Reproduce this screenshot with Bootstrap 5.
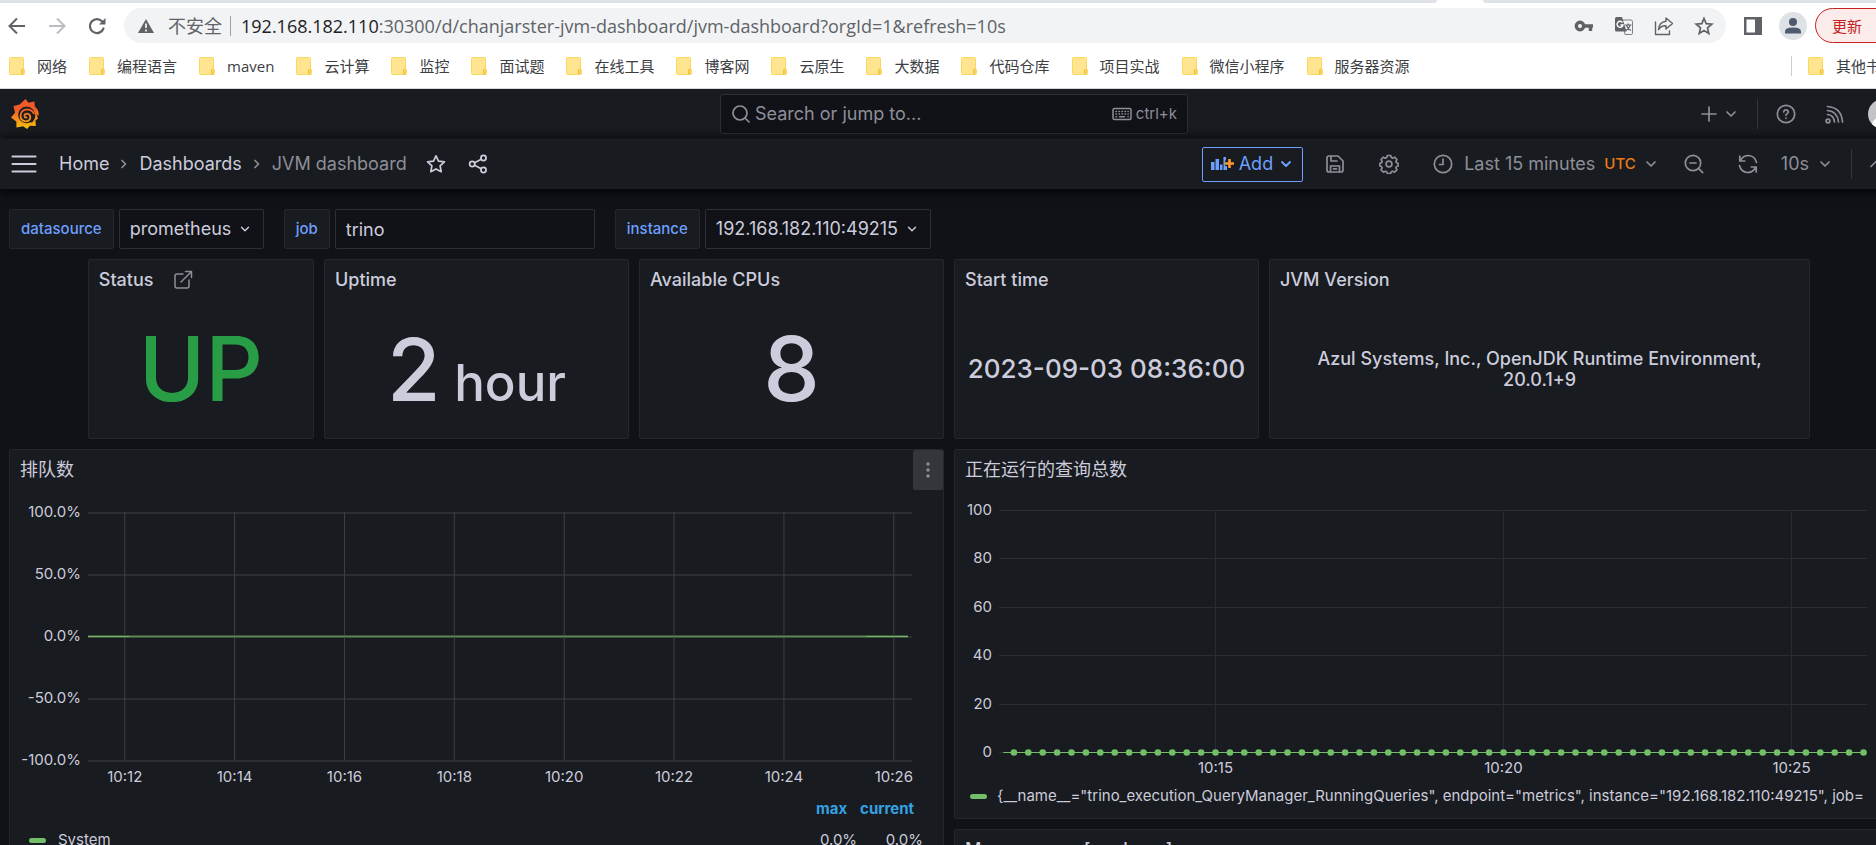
<!DOCTYPE html>
<html lang="zh-CN">
<head>
<meta charset="utf-8">
<meta name="viewport" content="width=device-width, initial-scale=1">
<title>JVM dashboard - Grafana</title>
<link href="https://cdn.jsdelivr.net/npm/bootstrap@5.3.0/dist/css/bootstrap.min.css" rel="stylesheet">
<style>
:root{--canvas:#111217;--panel:#181b1f;--line:#25272c;--line2:#2d2f35;--txt:#ccccdc;--dim:#8e8e99;--blue:#6e9fff}
body{background:var(--canvas);color:var(--txt);font-family:Inter,"Noto Sans CJK SC",sans-serif;font-size:18px;line-height:22px}
.wide{width:calc(100% + 32px)}
svg{display:block;flex:none}
.ico{width:20px;height:20px;fill:none;stroke:currentColor;stroke-width:1.7;stroke-linecap:round;stroke-linejoin:round}
.ico-s{width:16px;height:16px}
button{background:none;border:0;padding:0;color:inherit}
a{color:inherit;text-decoration:none}
/* browser chrome */
.browser{background:#fff;color:#3c4043;font-family:"Open Sans","Noto Sans CJK SC",sans-serif;border-bottom:1px solid #d5d7da}
.tabstrip{height:3px;background:#dee1e6}
.tabgap{width:48px;height:3px;background:#fff;margin-left:auto;margin-right:424px;border-radius:6px 6px 0 0}
.toolrow{height:45px;color:#5f6368;padding-left:7px}
.navico{width:20px;margin-right:20px}
.omni{height:35px;border-radius:18px;background:#f1f3f4;margin:0 18px 0 -3px;padding:0 12px 0 12px}
.omni-url{flex:1;color:#5f6368;font-size:18px;padding-left:10px}
.omni-url b{font-weight:400;color:#202124}
.warn{font-size:18px}
.vbar{width:1px;height:20px;background:#9aa0a6}
.update{height:35px;width:93px;border:1px solid #c5221f;border-radius:18px;background:#fbeceb;color:#c5221f;font-size:15px;text-align:left;padding-left:16px}
.marks{height:40px;font-size:15px;padding:0 12px 4px 9px;gap:22px;white-space:nowrap}
.marks a{display:flex;align-items:center;gap:12px;color:#3c4043}
/* grafana header */
.topbar{height:50px;background:var(--panel);border-bottom:1px solid var(--line);display:grid;grid-template-columns:1fr 468px 1fr;align-items:center;padding:0 10px;color:var(--dim)}
.searchbox{height:40px;border:1px solid var(--line2);border-radius:3px;background:var(--canvas);padding:0 10px}
.searchbox input{background:none;border:0;outline:0;color:var(--dim);flex:1;min-width:0;padding:0}
.searchbox input::placeholder{color:var(--dim);opacity:1}
.t15{font-size:15px}
.rule{width:1px;height:30px;background:#34363c}
.crumbs{height:50px;background:var(--panel);padding:0 24px 0 11px;box-shadow:0 1px 10px 1px #020204;position:relative}
.crumbs .tools,.faint{color:var(--dim)}
.trail{margin-left:22px}
.trail svg{margin:0 7px}
.ib{width:54px;display:flex;justify-content:center}
.addbtn{height:35px;border:1px solid var(--blue);border-radius:2px;color:var(--blue);padding:0 8px 0 7px;gap:5px;margin-right:5px}
.utc{color:#eb7b18;font-size:15px;font-weight:500;margin:0 7px 0 9px}
/* variables */
.canvas{padding:20px 19px 0 9px}
.vars{gap:20px}
.pair{gap:5px}
.tag{height:40px;border:1px solid var(--line);border-radius:2px;background:var(--panel);color:var(--blue);font-size:15px;font-weight:500;padding:0 11px;display:flex;align-items:center}
.field{height:40px;border:1px solid var(--line2);border-radius:2px;background:var(--canvas);color:var(--txt);padding:0 10px}
select.field{appearance:none;padding-right:31px;background:var(--canvas) url("data:image/svg+xml,%3Csvg xmlns='http://www.w3.org/2000/svg' viewBox='0 0 16 16' fill='none' stroke='%23ccccdc' stroke-width='1.600' stroke-linecap='round' stroke-linejoin='round'%3E%3Cpath d='M4 6l4 4 4-4'/%3E%3C/svg%3E") no-repeat right 11px center/14px}
.jobfield{width:260px}
/* panels */
.board{display:grid;grid-template-columns:repeat(24,minmax(0,1fr));gap:10px;margin-top:10px}
.pane{background:var(--panel);border:1px solid var(--line);border-radius:2px;min-width:0;overflow:hidden}
.pane h2{font-size:18px;line-height:40px;font-weight:500;margin:0;padding:0 10px}
.pane h2.cjk{font-weight:400}
.stat{height:180px;display:flex;flex-direction:column}
.statval{flex:1;display:flex;align-items:center;justify-content:center;font-weight:500;white-space:nowrap;text-align:center;line-height:1}
.s-up{color:#299c46;font-size:90px}
.s-2{grid-column:2/span 3}.w4{grid-column:span 4}.w7{grid-column:span 7}.w12{grid-column:span 12}
.big{font-size:90px}.two{font-size:87px}.unit{font-size:51px}.date{font-size:26px}
.ver{white-space:normal;font-size:18px;line-height:21px;padding:0 40px}
.kebab{width:30px;height:40px;background:#34363b;border-radius:2px;display:flex;align-items:center;justify-content:center;color:var(--dim)}
.tall{height:520px}
.mid{height:370px}
.plot{width:100%;overflow:visible;font-size:15px}
.plot text{fill:var(--txt)}
.legend{width:100%;font-size:15px;line-height:20px}
.legend th{color:#33a2e5;font-weight:700;text-align:right}
.legend td{text-align:right;padding-top:10px}
.key{display:inline-block;width:17px;height:5px;border-radius:3px;background:#73bf69}
</style>
</head>
<body>
<div class="vh-100 overflow-hidden position-relative">
<svg width="0" height="0" class="position-absolute">
<defs>
<linearGradient id="sun" gradientUnits="userSpaceOnUse" x1="0" y1="0" x2="0" y2="32"><stop offset="0" stop-color="#f05a28"/><stop offset=".35" stop-color="#f15b2a"/><stop offset="1" stop-color="#fbca0a"/></linearGradient>
<symbol id="folder" viewBox="0 0 16 18"><path d="M1.500.5h12q1 0 1 1V12l1 1v3.500q0 1-1 1h-13q-1 0-1-1v-15q0-1 1-1z" fill="#ffe58f" stroke="#fbd75b"/><path d="M12.500 17v-4q0-1 1.500-1v5z" fill="#ffe07a" stroke="#efc23f"/></symbol>
<symbol id="chev" viewBox="0 0 16 16"><path d="M4 6l4 4 4-4"/></symbol>
<symbol id="sep" viewBox="0 0 16 16"><path d="M6 4.500L9.500 8 6 11.500"/></symbol>
</defs>
</svg>

<header class="browser wide">
  <div class="tabstrip d-flex"><div class="tabgap"></div></div>
  <div class="toolrow d-flex align-items-center">
    <button class="navico" aria-label="后退"><svg class="ico" viewBox="0 0 20 20" style="stroke-width:2;stroke-linecap:butt;stroke-linejoin:miter"><path d="M18 10H3M10 2.500L2.500 10l7.500 7.500"/></svg></button>
    <button class="navico" aria-label="前进"><svg class="ico" viewBox="0 0 20 20" style="stroke-width:2;stroke:#bcbec1;stroke-linecap:butt;stroke-linejoin:miter"><path d="M2 10h15M10 2.500l7.500 7.500-7.500 7.500"/></svg></button>
    <button class="navico" aria-label="刷新"><svg class="ico" viewBox="0 0 20 20" style="stroke-width:2.200"><path d="M16.500 12.500a7 7 0 1 1-1.500-7.300"/><path d="M18.500 2v6.500H12z" fill="currentColor" stroke="none"/></svg></button>
    <div class="omni d-flex align-items-center flex-grow-1">
      <svg width="20" height="20" viewBox="0 0 20 20"><path d="M10 3l8 14H2z" fill="#5f6368"/><path d="M10 7.500v4.500M10 13.500v2" stroke="#fff" stroke-width="1.600"/></svg>
      <span class="warn ms-2 ps-1">不安全</span>
      <span class="vbar ms-2"></span>
      <span class="omni-url"><b>192.168.182.110</b>:30300/d/chanjarster-jvm-dashboard/jvm-dashboard?orgId=1&amp;refresh=10s</span>
      <div class="d-flex align-items-center" style="gap:20px">
      <button aria-label="密码"><svg width="20" height="20" viewBox="0 0 20 20" fill="none" stroke="currentColor"><circle cx="6" cy="10" r="3.700" stroke-width="3.400"/><path d="M9 10h10M16.500 10v5" stroke-width="3.400"/></svg></button>
      <button aria-label="翻译"><svg width="20" height="20" viewBox="0 0 20 20"><path d="M8 4h9q1.500 0 1.500 1.500v12q0 1-1.500 1h-6z" fill="#f1f3f4" stroke="#7d8186"/><path d="M2.500 1H8l4.500 14.500h-10Q1 15.500 1 14V2.500Q1 1 2.500 1z" fill="#5f6368"/><path d="M8.500 6.500A3 3 0 1 0 9 9H6.500" fill="none" stroke="#fff" stroke-width="1.400"/><path d="M11 9h6.500M14.200 7.500V9M16 9.500q-1 3.500-4 5M12.500 9.500q1.500 3.500 4.500 5" fill="none" stroke="#5f6368" stroke-width="1.200"/></svg></button>
      <button aria-label="分享"><svg class="ico" viewBox="0 0 20 20" style="stroke-width:1.400"><path d="M1.500 6v12.500h14V15"/><path d="M12 2l6.500 5.500L12 13V9.700q-5-.3-7.500 4 .5-7.500 7.500-8.400z"/></svg></button>
      <button aria-label="收藏"><svg class="ico" viewBox="0 0 20 20" style="stroke-linejoin:miter"><path d="M10 2.500l2.200 5.200 5.600.5-4.300 3.700 1.300 5.500-4.800-2.900-4.800 2.900 1.300-5.500L2.200 8.200l5.600-.5z"/></svg></button>
      </div>
    </div>
    <button aria-label="侧边栏" style="margin-right:17px"><svg width="18" height="18" viewBox="0 0 18 18"><path d="M0 0h18v18H0zM2.500 2.500v13H11v-13z" fill="#5f6368" fill-rule="evenodd"/></svg></button>
    <button aria-label="用户" class="me-2"><svg width="28" height="28" viewBox="0 0 28 28"><circle cx="14" cy="14" r="14" fill="#dee1e6"/><circle cx="14" cy="10" r="4" fill="#4e5a70"/><path d="M6 21.500v-2q0-4 8-4t8 4v2z" fill="#4e5a70"/></svg></button>
    <button class="update">更新</button>
  </div>
  <nav class="marks d-flex align-items-center">
    <a href="#"><svg width="16" height="18"><use href="#folder"/></svg>网络</a>
    <a href="#"><svg width="16" height="18"><use href="#folder"/></svg>编程语言</a>
    <a href="#"><svg width="16" height="18"><use href="#folder"/></svg>maven</a>
    <a href="#"><svg width="16" height="18"><use href="#folder"/></svg>云计算</a>
    <a href="#"><svg width="16" height="18"><use href="#folder"/></svg>监控</a>
    <a href="#"><svg width="16" height="18"><use href="#folder"/></svg>面试题</a>
    <a href="#"><svg width="16" height="18"><use href="#folder"/></svg>在线工具</a>
    <a href="#"><svg width="16" height="18"><use href="#folder"/></svg>博客网</a>
    <a href="#"><svg width="16" height="18"><use href="#folder"/></svg>云原生</a>
    <a href="#"><svg width="16" height="18"><use href="#folder"/></svg>大数据</a>
    <a href="#"><svg width="16" height="18"><use href="#folder"/></svg>代码仓库</a>
    <a href="#"><svg width="16" height="18"><use href="#folder"/></svg>项目实战</a>
    <a href="#"><svg width="16" height="18"><use href="#folder"/></svg>微信小程序</a>
    <a href="#"><svg width="16" height="18"><use href="#folder"/></svg>服务器资源</a>
    <span class="ms-auto d-flex align-items-center gap-3"><span class="vbar" style="background:#ccc"></span><a href="#"><svg width="16" height="18"><use href="#folder"/></svg>其他书签</a></span>
  </nav>
</header>

<div class="wide">
  <div class="topbar">
    <a href="#" aria-label="Grafana"><svg width="30" height="32" viewBox="0 0 30 32"><path d="M15.500 1l3 3.800 6-1.300.3 5q4 3 4 8l-.8 1.500q-.8-2-1.500-2.500l1.500 5-2.500 2 .3 5.500-5.800-.3-3 3.300-3.800-2.800-6.700 1.300-.2-6L1 19.500l4-4.700L3.500 8l6.200-1.500z" fill="url(#sun)"/><circle cx="16.500" cy="17" r="8.300" fill="#181b1f"/><path d="M22 24.500q5.500-6 1.500-12Q19 7 13 9.500l-4 4 3 9z" fill="#181b1f"/><path d="M16.500 19.500q-2 .3-2-1.500 0-2.300 2.500-2.300 3.300.3 3.300 3.600-.5 4-4.800 4-5.300-.6-5-6 .8-5.600 6.500-5.900 4.800.2 6.800 4" fill="none" stroke="url(#sun)" stroke-width="1.800" stroke-linecap="round"/></svg></a>
    <div class="searchbox d-flex align-items-center">
      <svg class="ico me-1" viewBox="0 0 20 20"><circle cx="9" cy="9" r="7"/><path d="M14 14l4 4"/></svg>
      <input type="text" placeholder="Search or jump to..." aria-label="Search or jump to...">
      <svg class="ico me-1" viewBox="0 0 20 20" style="stroke-width:1.500"><rect x="1" y="4.500" width="18" height="11" rx="1.500"/><path d="M4 7.500h.5M7 7.500h.5M10 7.500h.5M13 7.500h.5M16 7.500h.2M4 10h.5M7 10h.5M10 10h.5M13 10h.5M16 10h.2M4 12.800h.5M7.500 12.800h5M16 12.800h.2"/></svg>
      <span class="t15">ctrl+k</span>
    </div>
    <div class="d-flex align-items-center justify-content-end">
      <button class="d-flex align-items-center gap-1" style="margin-right:18px" aria-label="New"><svg class="ico" viewBox="0 0 20 20"><path d="M10 3v14M3 10h14"/></svg><svg class="ico ico-s"><use href="#chev"/></svg></button>
      <span class="rule" style="margin-right:18px"></span>
      <button aria-label="Help" style="margin-right:28px"><svg class="ico" viewBox="0 0 20 20"><circle cx="10" cy="10" r="8.700"/><path d="M7.800 8q.1-2.200 2.200-2.200T12.200 8q0 1.200-1.200 1.700-1 .5-1 1.600M10 14v.2"/></svg></button>
      <button aria-label="News" class="me-4"><svg class="ico" viewBox="0 0 20 20"><circle cx="4" cy="17" r="1.900"/><path d="M3.500 10.500q6.300.5 7 7.500M3.500 6.500q10 .8 11 11.500M3.500 2.500q14 1 15 15.500"/></svg></button>
      <svg width="30" height="30" viewBox="0 0 30 30" role="img" aria-label="Profile"><circle cx="15" cy="15" r="15" fill="#c4c4c6"/><circle cx="15" cy="12" r="7" fill="#fff"/><path d="M4 25q2-7 11-7t11 7q-5 5-11 5T4 25z" fill="#fff"/></svg>
    </div>
  </div>
  <div class="crumbs d-flex align-items-center">
    <button aria-label="Menu"><svg class="ico" viewBox="0 0 26 20" style="width:26px;stroke-width:2.200"><path d="M1.500 2.500h23M1.500 10h23M1.500 17.500h23"/></svg></button>
    <nav class="trail d-flex align-items-center">
      <a href="#">Home</a><svg class="ico ico-s faint"><use href="#sep"/></svg>
      <a href="#">Dashboards</a><svg class="ico ico-s faint"><use href="#sep"/></svg>
      <span class="faint">JVM dashboard</span>
    </nav>
    <button style="margin-left:19px" aria-label="Star"><svg class="ico" viewBox="0 0 20 20"><path d="M10 1.800l2.500 5.300 5.900.8-4.300 4 1.100 5.800L10 14.900l-5.200 2.800 1.100-5.800-4.300-4 5.900-.8z"/></svg></button>
    <button style="margin-left:22px" aria-label="Share"><svg class="ico" viewBox="0 0 20 20"><circle cx="15.500" cy="4" r="2.600"/><circle cx="4.200" cy="10" r="2.600"/><circle cx="15.500" cy="16" r="2.600"/><path d="M6.600 8.800l6.600-3.500M6.600 11.200l6.600 3.500"/></svg></button>
    <div class="tools d-flex align-items-center ms-auto">
      <button class="addbtn d-flex align-items-center"><svg width="24" height="18" viewBox="0 0 24 18"><path d="M1 7h3.500v8H1zM5.500 4H9v11H5.500zM10 9.500h2.500V15H10zM13.500 2H16v3.500h-1V11h2v4h-3.500z" fill="#6e9fff"/><path d="M19.500 4v9M15 8.500h9" stroke="#ff9830" stroke-width="2.600"/></svg>Add<svg class="ico ico-s" style="stroke-width:2"><use href="#chev"/></svg></button>
      <button class="ib" aria-label="Save"><svg class="ico" viewBox="0 0 20 20"><path d="M2 4q0-2 2-2h9l5 5v9q0 2-2 2H4q-2 0-2-2z"/><path d="M6 2.500V7h6M5.500 17.500V12h9v5.500M8.500 14.800h3"/></svg></button>
      <button class="ib" aria-label="Settings"><svg class="ico" viewBox="0 0 20 20"><circle cx="10" cy="10" r="2.900"/><path d="M8.300 1.500h3.400l.6 2.100 1.300.6 2-1 2.300 2.300-1 2 .6 1.300 1.600.5v2.600l-1.600.6-.6 1.400 1 2-2.300 2.300-2-1-1.300.6-.6 1.700H8.300l-.6-1.700-1.300-.6-2 1-2.300-2.300 1-2-.6-1.400-1.600-.6V9.300l1.600-.5.6-1.300-1-2 2.300-2.300 2 1 1.300-.6z"/></svg></button>
      <button class="d-flex align-items-center" style="padding:0 8px 0 17px"><svg class="ico" viewBox="0 0 20 20" style="margin-right:11px"><circle cx="10" cy="10" r="8.700"/><path d="M10 5v5.500H6.500"/></svg>Last 15 minutes<span class="utc">UTC</span><svg class="ico ico-s"><use href="#chev"/></svg></button>
      <button class="ib" aria-label="Zoom out"><svg class="ico" viewBox="0 0 20 20"><circle cx="9" cy="9" r="7.700"/><path d="M14.700 14.700l4 4M6 9h6"/></svg></button>
      <button class="ib" aria-label="Refresh"><svg class="ico" viewBox="0 0 20 20"><path d="M1.800 2v5h5M2.500 6.500Q5 1.500 10.500 1.500 17 2 18.500 8.500M18.200 18v-5h-5M17.500 13.500q-2.500 5-8 5Q3 18 1.500 11.500"/></svg></button>
      <button class="d-flex align-items-center" style="padding-left:6px;gap:8px;margin-right:18px">10s<svg class="ico ico-s"><use href="#chev"/></svg></button>
      <span class="rule me-3"></span>
      <button aria-label="Collapse"><svg class="ico ico-s" viewBox="0 0 16 16"><path d="M3 10.500l5-5 5 5"/></svg></button>
    </div>
  </div>

  <main class="canvas">
    <form class="vars d-flex">
      <div class="pair d-flex"><label class="tag" for="ds">datasource</label><select class="field" id="ds"><option>prometheus</option></select></div>
      <div class="pair d-flex"><label class="tag" for="job">job</label><input class="field jobfield" id="job" type="text" value="trino"></div>
      <div class="pair d-flex"><label class="tag" for="inst">instance</label><select class="field" id="inst"><option>192.168.182.110:49215</option></select></div>
    </form>

    <div class="board">
      <section class="pane stat s-2"><h2 class="d-flex align-items-center">Status<a href="#" aria-label="Open link" style="margin-left:20px"><svg class="ico faint" viewBox="0 0 20 20" style="stroke-width:1.500"><path d="M10 4H4Q2 4 2 6v10q0 2 2 2h10q2 0 2-2v-6M12.500 1.500h6v6M18.500 1.500L8 12"/></svg></a></h2><div class="statval s-up">UP</div></section>
      <section class="pane stat w4"><h2>Uptime</h2><div class="statval"><div><span class="two">2</span><span class="unit"> hour</span></div></div></section>
      <section class="pane stat w4"><h2>Available CPUs</h2><div class="statval big">8</div></section>
      <section class="pane stat w4"><h2>Start time</h2><div class="statval date">2023-09-03 08:36:00</div></section>
      <section class="pane stat w7"><h2>JVM Version</h2><div class="statval ver">Azul Systems, Inc., OpenJDK Runtime Environment, 20.0.1+9</div></section>
    </div>

    <div class="board align-items-start">
      <section class="pane tall w12">
        <div class="d-flex justify-content-between"><h2 class="cjk">排队数</h2><button class="kebab" aria-label="Menu"><svg width="6" height="16" viewBox="0 0 6 16" fill="currentColor"><circle cx="3" cy="2" r="1.700"/><circle cx="3" cy="8" r="1.700"/><circle cx="3" cy="14" r="1.700"/></svg></button></div>
        <div style="padding:22px 31px 0 78px"><svg class="plot" id="queued" height="286"></svg></div>
        <table class="legend">
          <thead><tr><th></th><th style="width:80px;padding-right:12px">max</th><th style="width:79px;padding-right:29px">current</th></tr></thead>
          <tbody><tr><td class="text-start" style="padding-left:19px"><span class="key align-middle me-2"></span><span class="ms-1">System</span></td><td style="padding-right:2px">0.0%</td><td style="padding-right:20px">0.0%</td></tr></tbody>
        </table>
      </section>
      <div class="w12 d-flex flex-column" style="gap:10px">
        <section class="pane mid">
          <h2 class="cjk">正在运行的查询总数</h2>
          <div style="padding:20px 21px 0 44px"><svg class="plot" id="running" height="275"></svg></div>
          <div class="d-flex align-items-center t15 text-nowrap" style="padding-left:15px;gap:10px"><span class="key flex-shrink-0"></span>{__name__="trino_execution_QueryManager_RunningQueries", endpoint="metrics", instance="192.168.182.110:49215", job=</div>
        </section>
        <section class="pane mid"><h2>Memory area [nonheap]</h2></section>
      </div>
    </div>
  </main>
</div>
</div>

<script src="https://cdn.jsdelivr.net/npm/bootstrap@5.3.0/dist/js/bootstrap.bundle.min.js"></script>
<script>
const NS='http://www.w3.org/2000/svg';
function add(svg,tag,attrs,text){
  const e=document.createElementNS(NS,tag);
  for(const k in attrs)e.setAttribute(k,attrs[k]);
  if(text)e.textContent=text;
  svg.appendChild(e);
}
// Grid with y labels on the left and time labels below; x positions are percentages of the plot width.
function grid(id,o){
  const svg=document.getElementById(id);
  o.y.forEach((t,i)=>{
    const y=Math.round(i*o.h/(o.y.length-1));
    add(svg,'rect',{x:0,y:y,width:'100%',height:o.w,fill:o.c});
    add(svg,'text',{x:-7,y:y+5,'text-anchor':'end'},t);
  });
  o.x.forEach((t,i)=>{
    const x=o.x0+i*o.dx+'%';
    add(svg,'line',{x1:x,x2:x,y1:0,y2:o.h,stroke:o.vc});
    add(svg,'text',{x:x,y:o.h+o.ty,'text-anchor':'middle'},t);
  });
  return svg;
}
const a=grid('queued',{h:248,w:2,c:'#2b2e31',vc:'#3d4043',ty:22,x0:4.46,dx:13.333,
  y:['100.0%','50.0%','0.0%','-50.0%','-100.0%'],x:['10:12','10:14','10:16','10:18','10:20','10:22','10:24','10:26']});
add(a,'rect',{x:0,y:123,width:'99.5%',height:3,fill:'#3a5238'});
add(a,'rect',{x:0,y:124,width:'99.5%',height:1,fill:'#5f8a54'});
add(a,'rect',{x:0,y:124,width:'5%',height:1,fill:'#7eb26d'});
add(a,'rect',{x:'94.5%',y:124,width:'5%',height:1,fill:'#7eb26d'});
const b=grid('running',{h:242,w:1,c:'#2b2e31',vc:'#2b2e31',ty:21,x0:24.94,dx:33.18,
  y:['100','80','60','40','20','0'],x:['10:15','10:20','10:25']});
add(b,'line',{x1:'0.5%',x2:'99.7%',y1:242.5,y2:242.5,stroke:'#73bf69'});
for(let i=0;i<60;i++)add(b,'circle',{cx:1.717+i*1.659+'%',cy:242.5,r:3.3,fill:'#73bf69'});
</script>
</body>
</html>
